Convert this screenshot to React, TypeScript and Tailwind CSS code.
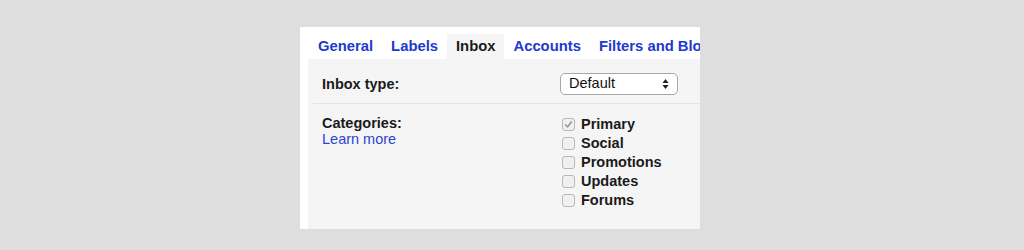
import React from "react";

const font = { fontFamily: '"Liberation Sans", Arial, Helvetica, sans-serif' };

function Box({ checked }: { checked?: boolean }) {
  return (
    <span className="w-[13px] h-[13px] rounded-[3px] border border-[#b8b8b8] bg-[#f0f0f0] flex items-center justify-center shrink-0">
      {checked && (
        <svg width="9" height="9" viewBox="0 0 9 9">
          <path d="M1.5 4.8 L3.5 7 L7.5 1.8" fill="none" stroke="#9a9a9a" strokeWidth="1.6" strokeLinecap="round" strokeLinejoin="round" />
        </svg>
      )}
    </span>
  );
}

export default function App() {
  const tabs = ["General", "Labels", "Inbox", "Accounts", "Filters and Blocked Addresses"];
  const cats = ["Primary", "Social", "Promotions", "Updates", "Forums"];
  return (
    <div className="w-full h-[250px] bg-[#dedede] pl-[300px] pt-[27px]" style={font}>
      <div className="w-[400px] h-[202px] bg-white overflow-hidden flex flex-col">
        <div className="flex pt-[7px] pl-[9px] h-[32px] whitespace-nowrap overflow-hidden">
          {tabs.map((t) => (
            <div
              key={t}
              className={
                "px-[9px] h-[25px] flex items-center text-[14.8px] font-bold shrink-0 " +
                (t === "Inbox" ? "bg-[#f5f5f5] text-[#1a1a1a]" : "text-[#2239cf]")
              }
            >
              {t}
            </div>
          ))}
        </div>
        <div className="ml-[8px] bg-[#f5f5f5] flex-1 flex flex-col">
          <div className="flex pt-[14px] h-[44px]">
            <div className="w-[252px] pl-[14px] text-[14.5px] font-bold text-[#1a1a1a] leading-[22px]">Inbox type:</div>
            <div className="w-[118px] h-[22px] bg-white border border-[#a8a8a8] rounded-[5px] flex items-center justify-between pl-[8px] pr-[8px]">
              <span className="text-[14.5px] text-[#111]">Default</span>
              <svg width="7" height="12" viewBox="0 0 7 12">
                <path d="M3.5 1 L6.5 5 L0.5 5 Z" fill="#222" />
                <path d="M3.5 11 L6.5 7 L0.5 7 Z" fill="#222" />
              </svg>
            </div>
          </div>
          <div className="ml-[5px] h-px bg-[#e4e4e4]" />
          <div className="flex pt-[11px]">
            <div className="w-[252px] pl-[14px] text-[14.5px] leading-[16px]">
              <div className="font-bold text-[#1a1a1a]">Categories:</div>
              <div className="text-[#2a45d6]">Learn more</div>
            </div>
            <div className="flex flex-col pl-[2px]">
              {cats.map((c, i) => (
                <div key={c} className="flex items-center h-[19px] gap-[6px]">
                  <Box checked={i === 0} />
                  <span className="text-[14.5px] font-bold text-[#1a1a1a]">{c}</span>
                </div>
              ))}
            </div>
          </div>
        </div>
      </div>
    </div>
  );
}
